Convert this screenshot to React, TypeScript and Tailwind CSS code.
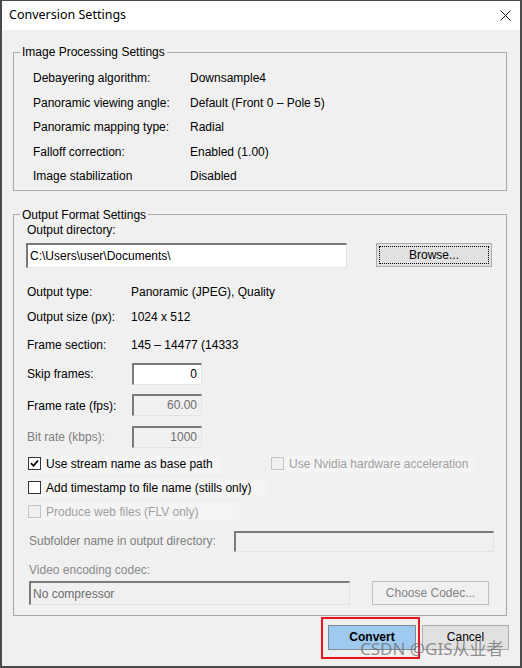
import React from "react";

const Check = ({ checked, disabled }: { checked?: boolean; disabled?: boolean }) => (
  <div
    className={`w-[13px] h-[13px] border flex items-center justify-center shrink-0 ${
      disabled ? "border-[#c4c4c4] bg-[#f0f0f0]" : "border-[#333333] bg-white"
    }`}
  >
    {checked && (
      <svg width="9" height="9" viewBox="0 0 9 9">
        <path d="M1 4.2 L3.4 6.8 L8 1.6" stroke="#000" strokeWidth="1.7" fill="none" />
      </svg>
    )}
  </div>
);

const Sunken = ({
  children,
  white,
  className,
}: {
  children?: React.ReactNode;
  white?: boolean;
  className: string;
}) => (
  <div
    className={`border-t-2 border-l-2 border-b border-r border-t-[#7a7a7a] border-l-[#7a7a7a] border-b-[#e3e3e3] border-r-[#e3e3e3] flex items-center ${
      white ? "bg-white text-black" : "bg-[#f0f0f0] text-[#6d6d6d]"
    } ${className}`}
  >
    {children}
  </div>
);

export default function App() {
  const rows1: [string, string][] = [
    ["Debayering algorithm:", "Downsample4"],
    ["Panoramic viewing angle:", "Default (Front 0 \u2013 Pole 5)"],
    ["Panoramic mapping type:", "Radial"],
    ["Falloff correction:", "Enabled (1.00)"],
    ["Image stabilization", "Disabled"],
  ];
  return (
    <div className="relative w-[522px] h-[668px] bg-[#f0f0f0] border-l-2 border-r-2 border-t border-b-2 border-[#4a4a4a] flex flex-col overflow-hidden font-['Liberation_Sans',Arial,sans-serif] text-[12px] text-black">
      {/* Title bar */}
      <div className="h-[29px] bg-white flex items-center justify-between pl-[7px] pr-[9px] shrink-0">
        <span className="font-['Noto_Sans',sans-serif] text-[12.5px] text-black">Conversion Settings</span>
        <svg width="11" height="11" viewBox="0 0 11 11">
          <path d="M0.5 0.5 L10.5 10.5 M10.5 0.5 L0.5 10.5" stroke="#111" strokeWidth="1" />
        </svg>
      </div>

      {/* Body */}
      <div className="flex flex-col pl-[11px] pt-[15px]">
        <fieldset className="w-[494px] border border-[#a9a9a9]">
          <legend className="ml-[6px] px-[2px] leading-[14px]">Image Processing Settings</legend>
          <div className="pt-[7px] pb-[1px] pl-[19px] flex flex-col">
            {rows1.map(([a, b]) => (
              <div key={a} className="flex items-center h-[24.5px]">
                <span className="w-[157px]">{a}</span>
                <span>{b}</span>
              </div>
            ))}
          </div>
        </fieldset>

        <fieldset className="w-[494px] border border-[#a9a9a9] mt-[17px]">
          <legend className="ml-[6px] px-[2px] leading-[14px]">Output Format Settings</legend>
          <div className="pl-[13px] pb-[10px] flex flex-col">
            <div className="mt-[1px] leading-[14px]">Output directory:</div>
            <div className="mt-[6px] flex items-start">
              <Sunken white className="ml-[-1px] w-[321px] h-[25px] pl-[2px]">
                C:\Users\user\Documents\
              </Sunken>
              <div className="ml-[29px] w-[116px] h-[24px] border border-[#adadad] bg-[#e1e1e1] p-[2px]">
                <div className="w-full h-full border border-dotted border-black flex items-center justify-center">
                  Browse...
                </div>
              </div>
            </div>

            <div className="mt-[17px] flex leading-[14px]">
              <span className="w-[104px]">Output type:</span>
              <span>Panoramic (JPEG), Quality</span>
            </div>
            <div className="mt-[11px] flex leading-[14px]">
              <span className="w-[104px]">Output size (px):</span>
              <span>1024 x 512</span>
            </div>
            <div className="mt-[14px] flex leading-[14px]">
              <span className="w-[104px]">Frame section:</span>
              <span>145 &ndash; 14477 (14333</span>
            </div>

            <div className="mt-[11px] flex items-center h-[22px]">
              <span className="w-[105px]">Skip frames:</span>
              <Sunken white className="w-[70px] h-[22px] justify-end pr-[4px]">0</Sunken>
            </div>
            <div className="mt-[9px] flex items-center h-[22px]">
              <span className="w-[105px] pt-[3px]">Frame rate (fps):</span>
              <Sunken className="w-[70px] h-[22px] justify-end pr-[4px]">60.00</Sunken>
            </div>
            <div className="mt-[10px] flex items-center h-[22px]">
              <span className="w-[105px] text-[#7f7f7f] pt-[1px]">Bit rate (kbps):</span>
              <Sunken className="w-[70px] h-[22px] justify-end pr-[4px]">1000</Sunken>
            </div>

            <div className="mt-[7px] flex h-[18px]">
              <div className="w-[193px] flex items-center bg-[#f4f4f4] pl-[1px]">
                <Check checked />
                <span className="ml-[5px]">Use stream name as base path</span>
              </div>
              <div className="ml-[50px] w-[205px] flex items-center bg-[#f4f4f4] pl-[1px] text-[#a0a0a0]">
                <Check disabled />
                <span className="ml-[5px]">Use Nvidia hardware acceleration</span>
              </div>
            </div>
            <div className="mt-[6px] flex h-[18px]">
              <div className="w-[240px] flex items-center bg-[#f4f4f4] pl-[1px]">
                <Check />
                <span className="ml-[5px]">Add timestamp to file name (stills only)</span>
              </div>
            </div>
            <div className="mt-[6px] flex h-[18px]">
              <div className="w-[212px] flex items-center bg-[#f4f4f4] pl-[1px] text-[#a0a0a0]">
                <Check disabled />
                <span className="ml-[5px]">Produce web files (FLV only)</span>
              </div>
            </div>

            <div className="mt-[10px] flex items-center h-[21px]">
              <span className="ml-[2px] w-[205px] text-[#7f7f7f]">Subfolder name in output directory:</span>
              <Sunken className="w-[260px] h-[21px]" />
            </div>
            <div className="mt-[11px] ml-[2px] leading-[14px] text-[#8a8a8a]">Video encoding codec:</div>
            <div className="mt-[4px] flex">
              <Sunken className="ml-[2px] w-[321px] h-[24px] pl-[2px] items-start pt-[2px]">
                <span className="text-[#6d6d6d]">No compressor</span>
              </Sunken>
              <div className="ml-[22px] w-[117px] h-[24px] border border-[#bfbfbf] bg-[#f0f0f0] flex items-center justify-center text-[#838383]">
                Choose Codec...
              </div>
            </div>
          </div>
        </fieldset>

        <div className="mt-[9px] flex">
          <div className="relative ml-[315px]">
            <div className="w-[88px] h-[25px] border border-[#7d8a97] bg-[#9ecaf0] flex items-center justify-center font-bold">
              Convert
            </div>
            <div className="absolute left-[-7px] top-[-8px] w-[99px] h-[42px] border-2 border-[#e8141c]" />
          </div>
          <div className="ml-[6px] w-[87px] h-[25px] border border-[#adadad] bg-[#e1e1e1] flex items-center justify-center">
            Cancel
          </div>
        </div>
      </div>

      {/* watermark */}
      <div className="absolute left-[358px] top-[638px] text-[17px] leading-[20px] font-['Noto_Sans','Noto_Sans_CJK_SC',sans-serif] text-[rgba(110,110,110,0.75)] whitespace-nowrap">
        CSDN @GIS从业者
      </div>
    </div>
  );
}
